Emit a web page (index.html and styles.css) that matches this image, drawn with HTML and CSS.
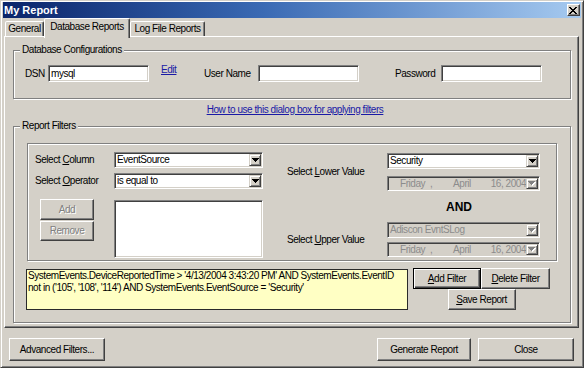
FILE: index.html
```html
<!DOCTYPE html>
<html>
<head>
<meta charset="utf-8">
<title>My Report</title>
<link rel="stylesheet" href="styles.css">
</head>
<body>
<div class="window">
  <div class="titlebar">
    <span class="title">My Report</span>
    <span class="close"><svg width="8" height="7" viewBox="0 0 8 7"><path d="M0 0h2v1h1v1h2v-1h1v-1h2v1h-1v1h-1v1h-1v1h1v1h1v1h1v1h-2v-1h-1v-1h-2v1h-1v1h-2v-1h1v-1h1v-1h1v-1h-1v-1h-1v-1h-1z" fill="#000"/></svg></span>
  </div>
  <div class="tabs">
    <div class="tab t-general">General</div>
    <div class="tab active t-db">Database Reports</div>
    <div class="tab t-log">Log File Reports</div>
  </div>
  <div class="panel">
    <div class="group g-db">
      <span class="legend">Database Configurations</span>
      <div class="db-row">
        <span class="l-dsn">DSN</span>
        <div class="field">mysql</div>
        <a class="link edit">Edit</a>
        <span class="l-user">User Name</span>
        <div class="field"></div>
        <span class="l-pass">Password</span>
        <div class="field"></div>
      </div>
    </div>
    <div class="help-row"><a class="link">How to use this dialog box for applying filters</a></div>
    <div class="group g-filters">
      <span class="legend">Report Filters</span>
      <div class="inner">
        <div class="left-grid">
          <span class="lbl">Select <u>C</u>olumn</span>
          <div class="combo"><span class="val">EventSource</span><span class="drop"><svg width="7" height="4" viewBox="0 0 7 4"><path d="M0 0H7V1H6V2H5V3H4V4H3V3H2V2H1V1H0Z" fill="#000"/></svg></span></div>
          <span class="lbl">Select <u>O</u>perator</span>
          <div class="combo"><span class="val">is equal to</span><span class="drop"><svg width="7" height="4" viewBox="0 0 7 4"><path d="M0 0H7V1H6V2H5V3H4V4H3V3H2V2H1V1H0Z" fill="#000"/></svg></span></div>
          <div class="btn-stack">
            <button class="btn dis b-add">Add</button>
            <button class="btn dis b-remove">Remove</button>
          </div>
          <div class="listbox"></div>
        </div>
        <div class="right-grid">
          <span class="lbl r-lower">Select <u>L</u>ower Value</span>
          <div class="combo r1"><span class="val">Security</span><span class="drop"><svg width="7" height="4" viewBox="0 0 7 4"><path d="M0 0H7V1H6V2H5V3H4V4H3V3H2V2H1V1H0Z" fill="#000"/></svg></span></div>
          <div class="combo date disabled r3"><span class="val"><span class="day">Friday</span><span class="comma">,</span><span class="month">April</span><span class="year">16, 2004</span></span><span class="drop"><svg width="8" height="5" viewBox="0 0 8 5"><path d="M1 1H8V2H7V3H6V4H5V5H4V4H3V3H2V2H1Z" fill="#fff"/><path d="M0 0H7V1H6V2H5V3H4V4H3V3H2V2H1V1H0Z" fill="#808080"/></svg></span></div>
          <div class="and">AND</div>
          <span class="lbl r-upper">Select <u>U</u>pper Value</span>
          <div class="combo disabled r5"><span class="val">Adiscon EvntSLog</span><span class="drop"><svg width="8" height="5" viewBox="0 0 8 5"><path d="M1 1H8V2H7V3H6V4H5V5H4V4H3V3H2V2H1Z" fill="#fff"/><path d="M0 0H7V1H6V2H5V3H4V4H3V3H2V2H1V1H0Z" fill="#808080"/></svg></span></div>
          <div class="combo date disabled r7"><span class="val"><span class="day">Friday</span><span class="comma">,</span><span class="month">April</span><span class="year">16, 2004</span></span><span class="drop"><svg width="8" height="5" viewBox="0 0 8 5"><path d="M1 1H8V2H7V3H6V4H5V5H4V4H3V3H2V2H1Z" fill="#fff"/><path d="M0 0H7V1H6V2H5V3H4V4H3V3H2V2H1V1H0Z" fill="#808080"/></svg></span></div>
        </div>
      </div>
      <div class="bottom-row">
        <div class="query">SystemEvents.DeviceReportedTime &gt; '4/13/2004 3:43:20 PM' AND SystemEvents.EventID<br>not in ('105', '108', '114') AND SystemEvents.EventSource = 'Security'</div>
        <div class="actions">
          <button class="btn default"><span><u>A</u>dd Filter</span></button>
          <button class="btn"><span><u>D</u>elete Filter</span></button>
          <button class="btn save"><span><u>S</u>ave Report</span></button>
        </div>
      </div>
    </div>
  </div>
  <div class="footer">
    <button class="btn f-adv">Advanced Filters...</button>
    <button class="btn f-gen">Generate Report</button>
    <button class="btn f-close">Close</button>
  </div>
</div>
</body>
</html>
```

FILE: styles.css
```css
* { box-sizing: border-box; }
html, body { margin: 0; padding: 0; }
body {
  width: 584px;
  height: 368px;
  overflow: hidden;
  background: #d4d0c8;
  font-family: "Liberation Sans", Arial, sans-serif;
  font-size: 10px;
  line-height: 12px;
  letter-spacing: -0.45px;
  color: #000;
}
.window {
  width: 584px;
  height: 368px;
  border: 1px solid;
  border-color: #d4d0c8 #404040 #404040 #d4d0c8;
  box-shadow: inset 1px 1px #fff, inset -1px -1px #808080;
  padding: 1px 3px 3px 3px;
  display: flex;
  flex-direction: column;
  background: #d4d0c8;
}
.titlebar {
  height: 16px;
  flex: none;
  margin: 0 -1px;
  background: linear-gradient(to right, #0a246a 0%, #3a6ab4 45%, #a6caf0 100%);
  display: flex;
  align-items: center;
  justify-content: space-between;
  padding: 0 1px 0 1px;
}
.title {
  color: #fff;
  font-weight: bold;
  font-size: 11px;
  letter-spacing: 0;
}
.close {
  width: 13px;
  height: 12px;
  background: #d4d0c8;
  border: 1px solid;
  border-color: #fff #404040 #404040 #fff;
  box-shadow: inset -1px -1px #808080;
  display: flex;
  align-items: center;
  justify-content: center;
}
.close svg { display: block; margin-left: -1px; }

.tabs {
  height: 18px;
  flex: none;
  display: flex;
  align-items: flex-start;
  padding-left: 1px;
  position: relative;
  z-index: 1;
}
.tab {
  margin-top: 3px;
  height: 15px;
  border: 1px solid;
  border-bottom: none;
  border-color: #fff #404040 transparent #fff;
  box-shadow: inset -1px 0 #808080;
  border-radius: 2px 2px 0 0;
  padding-top: 1px;
  text-align: center;
  background: #d4d0c8;
}
.tab.active {
  margin-top: 0;
  height: 20px;
  padding-top: 2px;
}
.t-general { width: 39px; }
.t-db { width: 86px; }
.t-log { width: 75px; }

.panel {
  height: 292px;
  flex: none;
  margin-right: 1px;
  border: 1px solid;
  border-color: #fff #404040 #404040 #fff;
  box-shadow: inset -1px -1px #808080;
  padding: 13px 7px 0 8px;
}

.group {
  position: relative;
  border: 1px solid #808080;
  box-shadow: inset 1px 1px #fff, 1px 1px #fff;
}
.legend {
  position: absolute;
  top: -7px;
  left: 6px;
  padding: 0 2px;
  background: #d4d0c8;
}
.g-db {
  height: 49px;
  padding: 14px 0 0 11px;
}
.db-row {
  display: flex;
  align-items: center;
  height: 17px;
}
.field {
  width: 101px;
  height: 17px;
  background: #fff;
  border: 1px solid;
  border-color: #808080 #fff #fff #808080;
  box-shadow: inset 1px 1px #404040, inset -1px -1px #d4d0c8;
  padding: 2px 0 0 2px;
}
.l-dsn { width: 23px; }
.edit { margin-left: 12px; width: 43px; align-self: flex-start; margin-top: -1px; }
.l-user { width: 54px; }
.l-pass { margin-left: 36px; width: 46px; }
.link {
  color: #1a1aa6;
  text-decoration: underline;
}
.help-row {
  height: 27px;
  display: flex;
  justify-content: center;
  padding: 5px 0 0 6px;
}

.g-filters {
  height: 197px;
  padding: 16px 0 0 12px;
}
.inner {
  margin-left: 1px;
  width: 530px;
  height: 118px;
  border: 1px solid #808080;
  box-shadow: inset 1px 1px #fff, 1px 1px #fff;
  display: flex;
  align-items: flex-start;
  padding: 8px 0 0 7px;
}
.left-grid {
  display: grid;
  grid-template-columns: 79px 149px;
  grid-template-rows: 16px 16px 64px;
  row-gap: 5px;
  align-items: center;
}
.right-grid {
  margin-left: 24px;
  margin-top: 1px;
  display: grid;
  grid-template-columns: 100px 153px;
  grid-template-rows: 16px 7px 15px 31px 16px 4px 15px;
  align-items: center;
}
.lbl { white-space: nowrap; }
.r-lower { grid-column: 1; grid-row: 1 / 4; }
.r-upper { grid-column: 1; grid-row: 5 / 8; }
.r1 { grid-column: 2; grid-row: 1; }
.r3 { grid-column: 2; grid-row: 3; }
.and { grid-column: 2; grid-row: 4; justify-self: start; margin-left: 59px; font-weight: bold; font-size: 12px; letter-spacing: 0; }
.r5 { grid-column: 2; grid-row: 5; }
.r7 { grid-column: 2; grid-row: 7; }

.combo {
  display: flex;
  height: 16px;
  background: #fff;
  border: 1px solid;
  border-color: #808080 #fff #fff #808080;
  box-shadow: inset 1px 1px #404040, inset -1px -1px #d4d0c8;
  padding: 1px;
}
.combo .val {
  flex: 1;
  padding-left: 1px;
  line-height: 12px;
  white-space: nowrap;
  overflow: hidden;
  display: flex;
}
.combo .drop {
  width: 12px;
  height: 12px;
  flex: none;
  background: #d4d0c8;
  border: 1px solid;
  border-color: #d4d0c8 #404040 #404040 #d4d0c8;
  box-shadow: inset 1px 1px #fff, inset -1px -1px #808080;
  display: flex;
  align-items: center;
  justify-content: center;
}
.combo .drop svg { display: block; }
.combo.disabled { background: #d4d0c8; color: #8c8c8c; }
.combo.date { height: 15px; }
.combo.date .val { line-height: 11px; padding-left: 11px; }
.combo.date .drop { height: 11px; }
.day { width: 31px; }
.comma { width: 24px; }
.month { width: 39px; }

.btn-stack {
  align-self: end;
  margin-left: 5px;
  margin-bottom: 17px;
  width: 54px;
  display: flex;
  flex-direction: column;
  gap: 1px;
}
.listbox {
  align-self: end;
  height: 58px;
  background: #fff;
  border: 1px solid;
  border-color: #808080 #fff #fff #808080;
  box-shadow: inset 1px 1px #404040, inset -1px -1px #d4d0c8;
}

.btn {
  -webkit-appearance: none;
  appearance: none;
  font: inherit;
  letter-spacing: inherit;
  line-height: 12px;
  color: #000;
  background: #d4d0c8;
  border: 1px solid;
  border-color: #fff #404040 #404040 #fff;
  box-shadow: inset -1px -1px #808080;
  padding: 0;
  margin: 0;
  display: flex;
  align-items: center;
  justify-content: center;
  border-radius: 0;
}
.btn.dis { color: #808080; text-shadow: 1px 1px #fff; }
.b-add { height: 21px; }
.b-remove { height: 20px; }
.btn.default {
  border: 1px solid #000;
  box-shadow: inset 1px 1px #fff, inset -1px -1px #404040, inset -2px -2px #808080;
}

.bottom-row {
  margin-top: 7px;
  display: flex;
  align-items: flex-start;
}
.query {
  margin-top: 1px;
  width: 382px;
  height: 41px;
  background: #ffffc4;
  border: 1px solid #2a2a2a;
  padding: 0 0 0 1px;
  white-space: nowrap;
  overflow: hidden;
}
.actions {
  margin-left: 5px;
  display: grid;
  grid-template-columns: 68px 69px;
  grid-template-rows: 21px 21px;
}
.actions .save {
  grid-column: 1 / 3;
  justify-self: center;
  width: 68px;
}

.footer {
  flex: 1;
  display: flex;
  align-items: flex-start;
  padding: 10px 6px 0 5px;
}
.footer .btn { height: 23px; }
.f-adv { width: 96px; }
.f-gen { width: 94px; margin-left: auto; }
.f-close { width: 96px; margin-left: 7px; }
```
